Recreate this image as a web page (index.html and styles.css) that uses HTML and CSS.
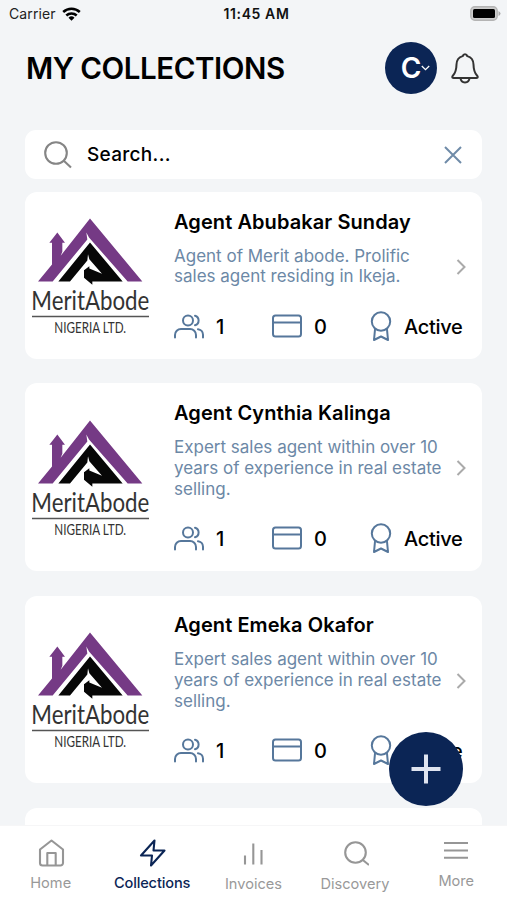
FILE: index.html
```html
<!DOCTYPE html>
<html lang="en">
<head>
<meta charset="utf-8">
<title>My Collections</title>
<link rel="stylesheet" href="styles.css">
</head>
<body>
<svg class="defs" width="0" height="0" aria-hidden="true">
  <symbol id="mark" viewBox="33 80 360 350">
    <path fill="#753a85" d="M210 84 367 273H323L207 141 199 126 202 147 98 273H54L96 222V157H88L112 126 135 157H127V184L122 196Z"/>
    <path fill="#070707" d="M210 156 308 273H217V283L192 262V239L208 227V234L246 250 208 206 204 191 202 210 150 273H115Z"/>
    <path stroke="#555" stroke-width="5" d="M36 378H387"/>
  </symbol>
  <symbol id="users" viewBox="0 0 30 30">
    <circle cx="14" cy="8.500" r="5"/><path d="M1 25.500V23a6 6 0 0 1 6-6H16a6 6 0 0 1 6 6V25.500M21 3.700a5 5 0 0 1 0 9.600M24 17.200a5.500 5.500 0 0 1 5 5.500V25.500"/>
  </symbol>
  <symbol id="cardicon" viewBox="0 0 30 30"><rect x="1" y="3.500" width="28" height="21" rx="2.500"/><path d="M1 10.500H29"/></symbol>
  <symbol id="award" viewBox="0 0 22 32"><circle cx="11" cy="10.500" r="9.200"/><path d="M5 18.500 4 29 11 25.500 18 29 17 18.500"/></symbol>
  <symbol id="chevron" viewBox="0 0 10 16"><path d="M1.500 1 8.500 8 1.500 15"/></symbol>
</svg>
<div class="screen">
  <div class="status">
    <div class="carrier"><span>Carrier</span>
      <svg width="19" height="14" viewBox="0 0 19 14" fill="none" stroke="#000" stroke-width="2.500"><path d="M1.200 5a12 12 0 0 1 16.600 0M4.300 8.500a7.500 7.500 0 0 1 10.400 0"/><path fill="#000" stroke="none" d="M6.500 10.800a4.300 4.300 0 0 1 6 0L9.500 13.800Z"/></svg>
    </div>
    <div class="time">11:45 AM</div>
    <svg class="battery" width="31" height="15" viewBox="0 0 31 15"><rect x=".8" y=".8" width="26.400" height="13.400" rx="4" fill="#ccc" stroke="#b4b4b4" stroke-width="1.400"/><rect x="3" y="3" width="22" height="9" rx="1.500"/><path fill="#aaa" d="M28.500 5q2 1 2 2.500t-2 2.500z"/></svg>
  </div>
  <header class="header">
    <h1>MY COLLECTIONS</h1>
    <div class="avatar"><span>C</span><svg width="9" height="6" viewBox="0 0 9 6"><path d="M.8 1 4.500 4.600 8.200 1"/></svg></div>
    <svg class="bell" width="28" height="31" viewBox="0 0 28 31"><path d="M14 1.300c1.500 0 2 .8 2.300 1.800 4 1.100 6.100 4.200 6.200 8.400.1 5 1 8.300 3.500 11 1 1.200 1.200 2.500-.5 2.500H2.500c-1.700 0-1.500-1.300-.5-2.500 2.500-2.700 3.400-6 3.500-11 .1-4.200 2.200-7.300 6.200-8.400.3-1 .8-1.800 2.300-1.800ZM9.500 25c.2 2.800 2 4.400 4.500 4.400s4.300-1.600 4.500-4.400"/></svg>
  </header>
  <div class="search">
    <svg width="28" height="28" viewBox="0 0 28 28"><circle cx="12" cy="12" r="10.800"/><path d="M19.800 19.800 27 26.500"/></svg>
    <span>Search...</span>
    <svg class="clear" width="18" height="18" viewBox="0 0 18 18"><path d="M1 1 17 17M17 1 1 17"/></svg>
  </div>
  <main class="list">
    <article class="card">
      <svg class="logo" viewBox="33 80 360 350"><use href="#mark" x="33" y="80" width="360" height="350"/><text x="34" y="359" font-size="80" textLength="354" lengthAdjust="spacingAndGlyphs">MeritAbode</text><text x="103" y="426" font-size="44" textLength="215" lengthAdjust="spacingAndGlyphs">NIGERIA LTD.</text></svg>
      <div class="info">
        <h2>Agent Abubakar Sunday</h2>
        <p>Agent of Merit abode. Prolific<br>sales agent residing in Ikeja.</p>
        <div class="stats">
          <div class="stat"><svg class="ic"><use href="#users"/></svg><b>1</b></div>
          <div class="stat"><svg class="ic"><use href="#cardicon"/></svg><b>0</b></div>
          <div class="stat"><svg class="ic award"><use href="#award"/></svg><b class="state">Active</b></div>
        </div>
      </div>
      <svg class="chev"><use href="#chevron"/></svg>
    </article>
    <article class="card">
      <svg class="logo" viewBox="33 80 360 350"><use href="#mark" x="33" y="80" width="360" height="350"/><text x="34" y="359" font-size="80" textLength="354" lengthAdjust="spacingAndGlyphs">MeritAbode</text><text x="103" y="426" font-size="44" textLength="215" lengthAdjust="spacingAndGlyphs">NIGERIA LTD.</text></svg>
      <div class="info">
        <h2>Agent Cynthia Kalinga</h2>
        <p>Expert sales agent within over 10<br>years of experience in real estate<br>selling.</p>
        <div class="stats">
          <div class="stat"><svg class="ic"><use href="#users"/></svg><b>1</b></div>
          <div class="stat"><svg class="ic"><use href="#cardicon"/></svg><b>0</b></div>
          <div class="stat"><svg class="ic award"><use href="#award"/></svg><b class="state">Active</b></div>
        </div>
      </div>
      <svg class="chev"><use href="#chevron"/></svg>
    </article>
    <article class="card">
      <svg class="logo" viewBox="33 80 360 350"><use href="#mark" x="33" y="80" width="360" height="350"/><text x="34" y="359" font-size="80" textLength="354" lengthAdjust="spacingAndGlyphs">MeritAbode</text><text x="103" y="426" font-size="44" textLength="215" lengthAdjust="spacingAndGlyphs">NIGERIA LTD.</text></svg>
      <div class="info">
        <h2>Agent Emeka Okafor</h2>
        <p>Expert sales agent within over 10<br>years of experience in real estate<br>selling.</p>
        <div class="stats">
          <div class="stat"><svg class="ic"><use href="#users"/></svg><b>1</b></div>
          <div class="stat"><svg class="ic"><use href="#cardicon"/></svg><b>0</b></div>
          <div class="stat"><svg class="ic award"><use href="#award"/></svg><b class="state">Active</b></div>
        </div>
      </div>
      <svg class="chev"><use href="#chevron"/></svg>
    </article>
    <div class="card next"></div>
  </main>
  <div class="fab"><svg width="30" height="30" viewBox="0 0 30 30"><path d="M15 .5V29.500M.5 15H29.500"/></svg></div>
  <nav class="tabs">
    <div class="tab"><svg viewBox="0 0 28 28"><path d="M3 10.500 14.500 1.500 26 10.500V24a2.500 2.500 0 0 1-2.500 2.500h-18A2.500 2.500 0 0 1 3 24ZM10.300 26V14h8.400V26"/></svg><span>Home</span></div>
    <div class="tab active"><svg viewBox="0 0 28 28"><path d="M16.500 1.500 3 16.500H14L13 26.500 26.500 11.500H15.500Z"/></svg><span>Collections</span></div>
    <div class="tab low"><svg viewBox="0 0 28 28"><path d="M6 15.500V24.500M14.300 3.500V24.500M22.500 10V24.500"/></svg><span>Invoices</span></div>
    <div class="tab low"><svg viewBox="0 0 28 28"><circle cx="14.500" cy="12.500" r="10.300"/><path d="M21.800 20 28 25"/></svg><span>Discovery</span></div>
    <div class="tab more"><svg viewBox="0 0 28 28"><path d="M2 7H26M2 14.500H26M2 21.800H26"/></svg><span>More</span></div>
  </nav>
</div>
</body>
</html>
```
FILE: styles.css
```css
* { box-sizing: border-box; }
body { margin: 0; font-family: Inter, "Liberation Sans", sans-serif; color: #000; }
svg { display: block; flex: none; }
.defs { position: absolute; }
.screen { position: relative; width: 507px; height: 900px; overflow: hidden; background: #f3f5f7; }
.status { display: grid; grid-template-columns: 1fr auto 1fr; align-items: center; height: 27px; padding: 0 6px 0 9px; font-size: 14px; }
.carrier { display: flex; align-items: center; gap: 6px; color: #222; letter-spacing: .1px; }
.time { font-weight: 600; font-size: 14px; letter-spacing: .6px; color: #111; margin-right: -3px; }
.battery { justify-self: end; }
.header { display: flex; align-items: center; height: 103px; padding: 0 28px 21px 26px; }
.header h1 { flex: 1; margin: 0; font-size: 29.500px; line-height: 40px; font-weight: 600; letter-spacing: -.45px; white-space: nowrap; }
.avatar { display: flex; align-items: center; justify-content: center; width: 52px; height: 52px; padding-left: 9px; margin-right: 14px; border-radius: 50%; background: #0b2555; color: #fff; font-size: 28px; font-weight: 600; }
.avatar svg { fill: none; stroke: #fff; stroke-width: 1.3; }
.bell { fill: none; stroke: #333; stroke-width: 2; stroke-linejoin: round; }
.search { display: flex; align-items: center; height: 49px; margin: 0 25px; padding: 0 20px 0 19px; border-radius: 11px; background: #fff; font-size: 19px; font-weight: 500; letter-spacing: .3px; }
.search span { flex: 1; padding-left: 15px; line-height: 48px; }
.search svg { fill: none; stroke: #858585; stroke-width: 2.1; }
.search .clear { stroke: #6f8ba8; stroke-width: 2; }
.list { display: flex; flex-direction: column; gap: 24.500px; padding: 13px 25px 0; }
.card { display: flex; align-items: center; flex: none; border-radius: 12px; background: #fff; padding: 17.500px 16px 17px 6px; }
.next { height: 188px; }
.logo { width: 120px; height: 117px; overflow: visible; }
.logo text { font-family: Lato, sans-serif; fill: #333; }
.info { flex: 1; min-width: 0; padding-left: 23px; }
.info h2 { margin: 0 0 12px; font-size: 20px; line-height: 24px; font-weight: 600; letter-spacing: .08px; white-space: nowrap; }
.info p { margin: 0 0 24.500px; font-size: 17px; line-height: 20.900px; color: #6c88a6; white-space: nowrap; }
.stats { display: grid; grid-template-columns: 98px 98px auto; align-items: center; height: 30px; margin-right: -20px; }
.stat { display: flex; align-items: center; height: 30px; gap: 12px; font-size: 20px; }
.stat b { font-weight: 500; }
.stat .state { letter-spacing: -.3px; }
.ic { width: 30px; height: 30px; fill: none; stroke: #56779b; stroke-width: 2; stroke-linejoin: round; stroke-linecap: round; }
.award { width: 22px; height: 32px; }
.chev { width: 10px; height: 16px; margin-bottom: 18px; fill: none; stroke: #aaa; stroke-width: 2; }
.fab { position: absolute; left: 389px; top: 732px; width: 74px; height: 74px; border-radius: 50%; background: #0b2555; display: flex; align-items: center; justify-content: center; }
.fab svg { stroke: #dfe4f0; stroke-width: 4; }
.tabs { position: absolute; left: 0; right: 0; bottom: 0; height: 75px; background: #fff; display: grid; grid-template-columns: repeat(5, 1fr); border-top: 1px solid #f6f6f7; }
.tab { display: flex; flex-direction: column; align-items: center; padding-top: 13px; gap: 7px; font-size: 14.600px; line-height: 18px; color: #999; }
.tab svg { width: 28px; height: 28px; fill: none; stroke: #969696; stroke-width: 2.1; stroke-linejoin: round; }
.tab.active { color: #0b2555; font-weight: 500; letter-spacing: -.15px; }
.tab.active svg { stroke: #0b2555; }
.tab.low { padding-top: 14px; }
.tab.more { padding-top: 10px; gap: 8px; }
```
